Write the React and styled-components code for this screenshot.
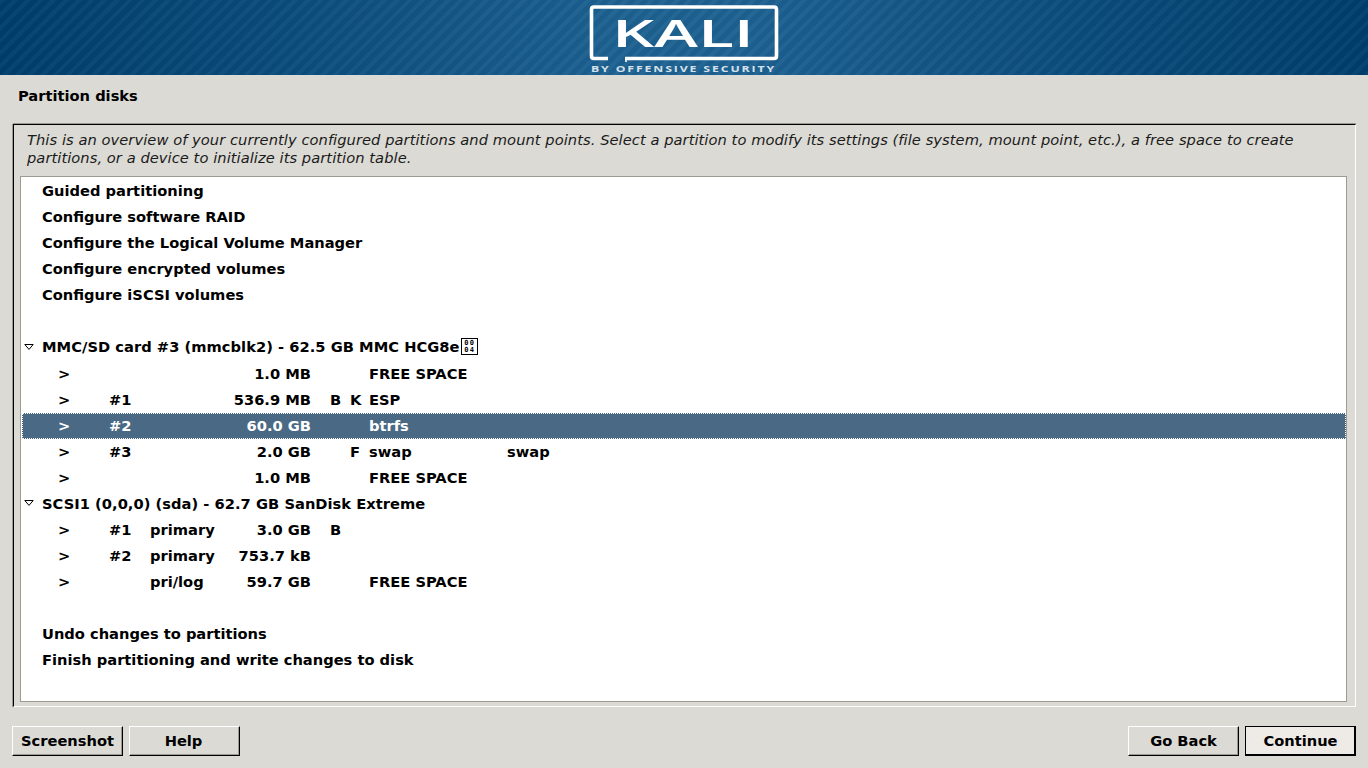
import React from 'react';
import styled, { createGlobalStyle } from 'styled-components';

const GlobalStyle = createGlobalStyle`
  * {
    margin: 0;
    padding: 0;
    box-sizing: border-box;
  }
  html, body {
    height: 768px;
    overflow: hidden;
  }
  body {
    font-family: "DejaVu Sans", sans-serif;
    font-size: 14.67px;
    color: #000;
    background-color: #dcdad5;
  }
`;

const Page = styled.div`
  width: 1368px;
  height: 768px;
  display: flex;
  flex-direction: column;
`;

const Banner = styled.header`
  height: 75px;
  display: flex;
  justify-content: center;
  background:
    repeating-linear-gradient(135deg, rgba(255,255,255,0.03) 0 4px, rgba(0,0,0,0.03) 4px 9px),
    linear-gradient(90deg, #003e6d 0%, #0b4d7d 22%, #1d6191 45%, #1d6191 55%, #0b4d7d 78%, #003e6d 100%);
`;

const Title = styled.h1`
  height: 49px;
  padding: 12px 0 0 18px;
  font-size: 14.67px;
  line-height: 17px;
  font-weight: bold;
`;

const Frame = styled.section`
  width: 1343px;
  height: 583px;
  margin-left: 13px;
  padding: 6px 8px 4px 6px;
  border-style: solid;
  border-width: 1px;
  border-color: #000 #fff #fff #000;
  box-shadow: 0 -1px 0 #9d9a91, -1px 0 0 #9d9a91;
  display: flex;
  flex-direction: column;
`;

const Intro = styled.p`
  height: 45px;
  padding-left: 7px;
  font-style: italic;
  font-size: 14.67px;
  line-height: 18px;
  letter-spacing: 0.057px;
  color: #1a1a1a;
`;

const List = styled.div`
  flex: 1;
  padding-top: 1px;
  background: #fff;
  border: 1px solid #9d9a91;
  display: flex;
  flex-direction: column;
`;

const Row = styled.div`
  height: ${p => (p.$tall ? 27 : 26)}px;
  padding: 0 0 2px ${p => (p.$tree ? 3 : 21)}px;
  display: flex;
  align-items: center;
  font-weight: bold;
  white-space: pre;
  line-height: 17px;
  letter-spacing: ${p => (p.$tree ? '0.03px' : 'normal')};
`;

const PartRow = styled.div`
  height: 26px;
  margin-left: ${p => (p.$selected ? 1 : 0)}px;
  padding: 0 0 2px ${p => (p.$selected ? 36 : 37)}px;
  display: grid;
  grid-template-columns: 51px 41px 70px 91px 19px 20px 19px 138px auto;
  align-items: center;
  font-weight: bold;
  white-space: pre;
  line-height: 17px;
  color: ${p => (p.$selected ? '#fff' : '#000')};
  background: ${p => (p.$selected ? '#4a6984' : 'transparent')};
  outline: ${p => (p.$selected ? '1px dotted #fff' : 'none')};
  outline-offset: -1px;
`;

const SizeCell = styled.span`
  text-align: right;
`;

const Tree = styled.svg`
  width: 10px;
  height: 6px;
  margin-right: 8px;
  flex: none;
`;

const Tofu = styled.span`
  width: 17px;
  height: 17px;
  margin-left: 1px;
  border: 1px solid #000;
  display: inline-grid;
  grid-template-columns: 1fr 1fr;
  align-content: center;
  justify-items: center;
  font-family: "DejaVu Sans Mono", monospace;
  font-size: 7px;
  line-height: 7px;
  letter-spacing: 0;
  font-weight: bold;
  padding: 0 2px;
`;

const Footer = styled.footer`
  height: 61px;
  padding: 19px 12px 0;
  display: flex;
  gap: 6px;
`;

const Spacer = styled.div`
  flex: 1;
`;

const Button = styled.button`
  width: 111px;
  height: 30px;
  padding: 0 ${p => (p.$nudge ? 2 : 0)}px ${p => (p.$primary ? 0 : 2)}px ${p => (p.$primary ? 1 : 0)}px;
  font-family: inherit;
  font-size: 14.67px;
  font-weight: bold;
  color: #000;
  background: ${p => (p.$primary ? '#eeebe7' : '#dcdad5')};
  border-style: solid;
  border-width: ${p => (p.$primary ? '1px 2px 2px 1px' : '1px')};
  border-color: ${p => (p.$primary ? '#000' : '#fff #000 #000 #fff')};
  box-shadow: ${p => (p.$primary ? 'none' : 'inset -1px -1px 0 #9d9a91')};
`;

const Logo = () => (
  <svg width="200" height="75" viewBox="0 0 200 75">
    <path
      d="M24 58.5 H10 Q7.5 58.5 7.5 56 V9.5 Q7.5 7 10 7 H190 Q192.5 7 192.5 9.5 V56 Q192.5 58.5 190 58.5 H41"
      fill="none"
      stroke="#fff"
      strokeWidth="3.6"
    />
    <path d="M42 58 V62" stroke="#fff" strokeWidth="1.6" fill="none" />
    <text x="28" y="47" fontFamily="Open Sans, sans-serif" fontSize="38" fontWeight="600" fill="#fff" textLength="142" lengthAdjust="spacingAndGlyphs">KALI</text>
    <text x="7" y="71.5" fontFamily="Open Sans, sans-serif" fontSize="9.2" fontWeight="700" letterSpacing="1.4" fill="#d5e1ea" textLength="185" lengthAdjust="spacingAndGlyphs">BY OFFENSIVE SECURITY</text>
  </svg>
);

const Triangle = () => (
  <Tree viewBox="0 0 10 6">
    <path d="M0.8 0.5 H9.2 L5 5.4 Z" fill="#fff" stroke="#000" strokeWidth="1" />
  </Tree>
);

const Part = ({ num, type, size, b, k, fs, mount, selected }) => (
  <PartRow $selected={selected}>
    <span>{'>'}</span>
    <span>{num}</span>
    <span>{type}</span>
    <SizeCell>{size}</SizeCell>
    <span />
    <span>{b}</span>
    <span>{k}</span>
    <span>{fs}</span>
    <span>{mount}</span>
  </PartRow>
);

export default function App() {
  return (
    <Page>
      <GlobalStyle />
      <Banner>
        <Logo />
      </Banner>
      <Title>Partition disks</Title>
      <Frame>
        <Intro>
          This is an overview of your currently configured partitions and mount points. Select a partition to modify its settings (file system, mount point, etc.), a free space to create
          <br />
          partitions, or a device to initialize its partition table.
        </Intro>
        <List>
          <Row>Guided partitioning</Row>
          <Row>Configure software RAID</Row>
          <Row>Configure the Logical Volume Manager</Row>
          <Row>Configure encrypted volumes</Row>
          <Row>Configure iSCSI volumes</Row>
          <Row />
          <Row $tree $tall>
            <Triangle />
            MMC/SD card #3 (mmcblk2) - 62.5 GB MMC HCG8e
            <Tofu>
              <span>0</span>
              <span>0</span>
              <span>0</span>
              <span>4</span>
            </Tofu>
          </Row>
          <Part size="1.0 MB" fs="FREE SPACE" />
          <Part num="#1" size="536.9 MB" b="B" k="K" fs="ESP" />
          <Part num="#2" size="60.0 GB" fs="btrfs" selected />
          <Part num="#3" size="2.0 GB" k="F" fs="swap" mount="swap" />
          <Part size="1.0 MB" fs="FREE SPACE" />
          <Row $tree>
            <Triangle />
            SCSI1 (0,0,0) (sda) - 62.7 GB SanDisk Extreme
          </Row>
          <Part num="#1" type="primary" size="3.0 GB" b="B" />
          <Part num="#2" type="primary" size="753.7 kB" />
          <Part type="pri/log" size="59.7 GB" fs="FREE SPACE" />
          <Row />
          <Row>Undo changes to partitions</Row>
          <Row>Finish partitioning and write changes to disk</Row>
        </List>
      </Frame>
      <Footer>
        <Button>Screenshot</Button>
        <Button $nudge>Help</Button>
        <Spacer />
        <Button>Go Back</Button>
        <Button $primary>Continue</Button>
      </Footer>
    </Page>
  );
}
